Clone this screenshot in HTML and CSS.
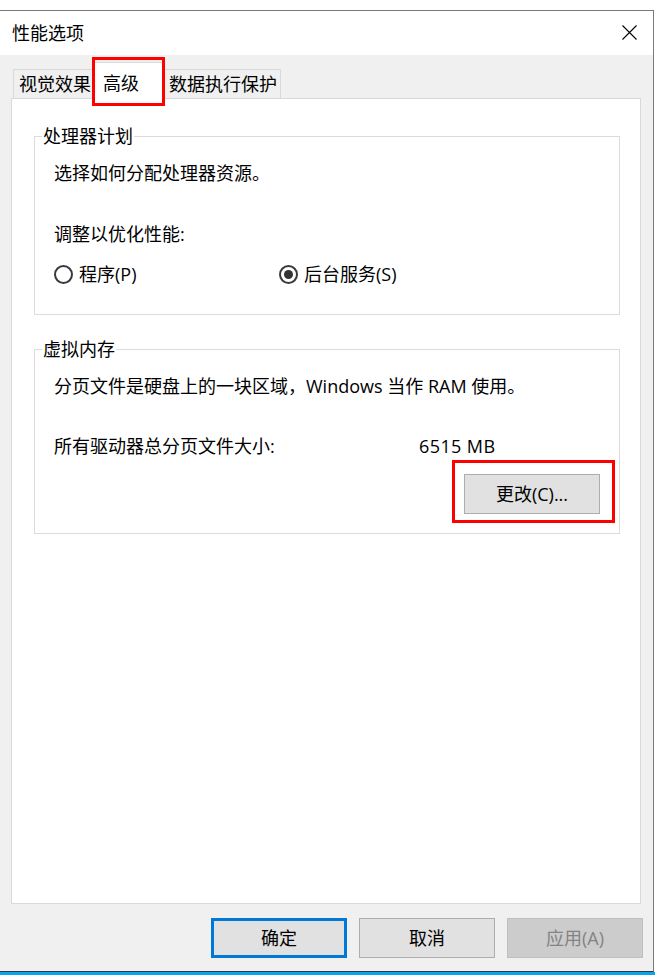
FILE: index.html
```html
<!DOCTYPE html>
<html lang="zh-CN">
<head>
<meta charset="utf-8">
<title>性能选项</title>
<link rel="stylesheet" href="styles.css">
</head>
<body>
<div class="window">
    <div class="titleBar">
        <span>性能选项</span>
        <svg class="closeIcon" width="15" height="15" viewBox="0 0 15 15">
            <path d="M0.5 0.5L14.5 14.5M14.5 0.5L0.5 14.5" stroke="#000" stroke-width="1.1" fill="none"/>
        </svg>
    </div>

    <div class="dialogBody">
        <div class="tabs">
            <div class="tab firstTab">视觉效果</div>
            <div class="tab selectedTab">高级</div>
            <div class="tab">数据执行保护</div>
        </div>

        <div class="tabPanel">
            <fieldset class="group">
                <legend>处理器计划</legend>
                <p class="line">选择如何分配处理器资源。</p>
                <p class="line bigGap">调整以优化性能:</p>
                <div class="radioRow">
                    <label class="radio firstRadio"><span class="radioMark"></span>程序(P)</label>
                    <label class="radio"><span class="radioMark checked"></span>后台服务(S)</label>
                </div>
            </fieldset>

            <fieldset class="group secondGroup">
                <legend>虚拟内存</legend>
                <p class="line">分页文件是硬盘上的一块区域，Windows 当作 RAM 使用。</p>
                <div class="line bigGap sizeRow">
                    <span>所有驱动器总分页文件大小:</span>
                    <span class="sizeValue">6515 MB</span>
                </div>
                <div class="buttonRow">
                    <button class="button">更改(C)...</button>
                </div>
            </fieldset>
        </div>

        <div class="dialogButtons">
            <button class="button dialogButton defaultButton">确定</button>
            <button class="button dialogButton">取消</button>
            <button class="button dialogButton disabledButton">应用(A)</button>
        </div>
    </div>

    <div class="mark markTab"></div>
    <div class="mark markChange"></div>
</div>
<div class="taskbar"></div>
</body>
</html>
```

FILE: styles.css
```css
html, body {
    margin: 0;
    padding: 0;
    background: white;
}

body {
    font-family: "Open Sans", "Noto Sans CJK SC", sans-serif;
    font-size: 18px;
    color: black;
}

.window {
    position: relative;
    margin-top: 10px;
    width: 653px;
    border-top: 1px solid #7a7a7a;
    border-right: 1px solid #7a7a7a;
    border-bottom: 1px solid #2b3a48;
}

.titleBar {
    height: 44px;
    background: white;
    display: flex;
    align-items: center;
    justify-content: space-between;
    padding: 0 16px 0 12px;
    line-height: 24px;
}

.closeIcon {
    display: block;
    margin-bottom: 1px;
}

.dialogBody {
    background: #f0f0f0;
    height: 916px;
}

.tabs {
    height: 43px;
    display: flex;
    align-items: flex-end;
    padding-left: 13px;
}

.tab {
    box-sizing: border-box;
    height: 29px;
    line-height: 28px;
    padding: 0 3px 0 5px;
    border: 1px solid #d9d9d9;
    border-bottom: none;
    background: #f0f0f0;
    white-space: nowrap;
}

.selectedTab {
    position: relative;
    z-index: 1;
    width: 72px;
    height: 37px;
    margin: 0 -2px -1px -2px;
    padding: 6px 0 0 9px;
    background: white;
}

.tabPanel {
    box-sizing: border-box;
    height: 806px;
    margin: 0 12px 0 11px;
    padding: 25px 20px 0 22px;
    background: white;
    border: 1px solid #d9d9d9;
}

.group {
    margin: 0;
    padding: 13px 19px 28px 19px;
    border: 1px solid #dcdcdc;
}

.group legend {
    padding: 0 1px;
    margin-left: -12px;
    line-height: 24px;
}

.secondGroup {
    margin-top: 22px;
    padding-bottom: 19px;
}

.line {
    margin: 0;
    line-height: 24px;
    white-space: nowrap;
}

.bigGap {
    margin-top: 37px;
}

.secondGroup .bigGap {
    margin-top: 36px;
}

.radioRow {
    display: flex;
    margin-top: 16px;
    line-height: 24px;
}

.radio {
    display: flex;
    align-items: center;
}

.firstRadio {
    width: 225px;
}

.radioMark {
    box-sizing: border-box;
    width: 19px;
    height: 19px;
    margin-right: 6px;
    border: 2px solid #3a3a3a;
    border-radius: 50%;
    display: flex;
    align-items: center;
    justify-content: center;
}

.checked::after {
    content: "";
    width: 9px;
    height: 9px;
    border-radius: 50%;
    background: #333333;
}

.sizeRow {
    display: grid;
    grid-template-columns: 365px auto;
}

.sizeValue {
    letter-spacing: 0.4px;
}

.buttonRow {
    display: flex;
    justify-content: flex-end;
    margin-top: 16px;
}

.button {
    box-sizing: border-box;
    width: 136px;
    height: 40px;
    margin: 0;
    padding: 0;
    font: inherit;
    line-height: 24px;
    color: black;
    background: #e1e1e1;
    border: 1px solid #adadad;
}

.dialogButtons {
    display: flex;
    justify-content: flex-end;
    gap: 12px;
    margin-top: 14px;
    padding-right: 10px;
}

.defaultButton {
    border: 3px solid #0078d7;
}

.disabledButton {
    background: #cccccc;
    border-color: #bfbfbf;
    color: #838383;
}

.mark {
    position: absolute;
    box-sizing: border-box;
    border: 3px solid #ff0000;
    z-index: 2;
}

.markTab {
    left: 92px;
    top: 46px;
    width: 73px;
    height: 49px;
}

.markChange {
    left: 452px;
    top: 449px;
    width: 163px;
    height: 63px;
}

.taskbar {
    height: 3px;
    background: #0aa4ea;
}
```
